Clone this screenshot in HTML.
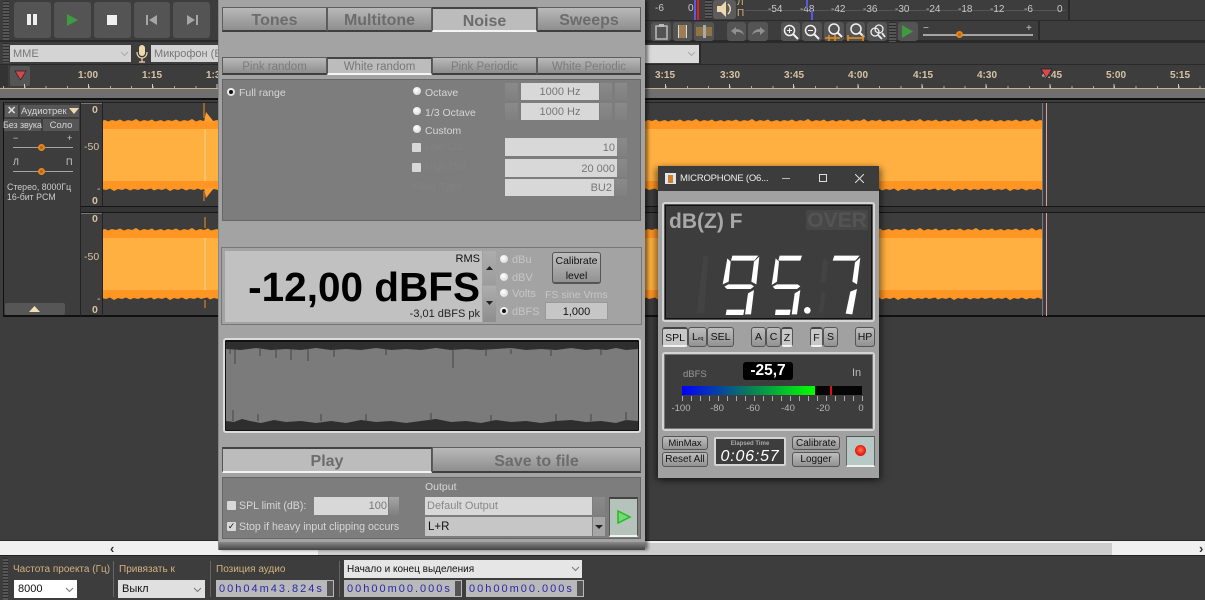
<!DOCTYPE html>
<html><head><meta charset="utf-8">
<style>
html,body{margin:0;padding:0;background:#3d3d3d}
#r{position:relative;width:1205px;height:600px;overflow:hidden;background:#3d3d3d;font-family:"Liberation Sans",sans-serif;font-size:10.5px}
.a,.t{position:absolute;box-sizing:border-box}
.t{white-space:nowrap}
.c{text-align:center}
.tab{background:linear-gradient(#b9b9b9,#8e8e8e);border:1px solid #5d5d5d;border-bottom:2px solid #3f3f3f;color:#6c6c6c;font-weight:bold;font-size:16px;text-align:center;line-height:26px}
.sel{background:#bcbcbc;border-top:2px solid #444;border-bottom:2px solid #f4f4f4;border-left:1px solid #555;border-right:1px solid #555;line-height:25px}
.sub{font-weight:normal;font-size:11.5px;line-height:18px;color:#7c7c7c}
.tb{background:#545454;border-radius:3px}
.rd{position:absolute;width:8px;height:8px;border-radius:50%;background:radial-gradient(circle at 40% 35%,#fff,#d0d0d0)}
.rd.on::after{content:"";position:absolute;left:2px;top:2px;width:4px;height:4px;border-radius:50%;background:#111}
.f{position:absolute;background:#d8d8d8;color:#777;text-align:right;box-sizing:border-box;font-size:11px}
.g{position:absolute;background:linear-gradient(#8a8a8a,#808080);box-sizing:border-box}
.cb{position:absolute;width:9px;height:9px;background:#d8d8d8;border-radius:1px}
.l{color:#d6d6d6}
.btn{position:absolute;box-sizing:border-box;background:linear-gradient(#bdbdbd,#929292);border:1px solid #555;border-radius:3px;color:#111;text-align:center;font-size:10px}
.btnl{background:#c8c8c8;border-top:2px solid #444;border-bottom:2px solid #f2f2f2}
.tan{color:#d2b27f}
.time{position:absolute;background:#b9b9b9;color:#2929ab;font-size:11px;letter-spacing:2px;height:17px;line-height:18px;padding-left:3px;white-space:nowrap;box-sizing:border-box;overflow:hidden}
.time i{position:absolute;right:1px;top:1px;width:6px;height:15px;background:#555;display:block}
.r{color:#d6c3a4;font-weight:bold;font-size:10px;transform:translateX(-50%)}
.ru{color:#d6c3a4;font-size:10.5px}
</style></head><body>
<div id="r">

<!-- top toolbar -->
<div class="a" style="left:3px;top:1px;width:6px;height:39px;background:repeating-linear-gradient(#2c2c2c 0 1px,#565656 1px 3px)"></div>
<div class="a tb" style="left:14px;top:2px;width:37px;height:36px"></div>
<div class="a" style="left:27px;top:14px;width:4px;height:11px;background:#eee"></div>
<div class="a" style="left:33px;top:14px;width:4px;height:11px;background:#eee"></div>
<div class="a tb" style="left:54px;top:2px;width:37px;height:36px"></div>
<svg class="a" style="left:65px;top:13px" width="15" height="14"><path d="M2 1L13 7 2 13Z" fill="#3f9b3f"/></svg>
<div class="a tb" style="left:94px;top:2px;width:37px;height:36px"></div>
<div class="a" style="left:107px;top:15px;width:10px;height:10px;background:#f0f0f0"></div>
<div class="a tb" style="left:134px;top:2px;width:36px;height:36px"></div>
<svg class="a" style="left:145px;top:14px" width="14" height="12"><path d="M1 1H3V11H1ZM12 1V11L4 6Z" fill="#a6a6a6"/></svg>
<div class="a tb" style="left:173px;top:2px;width:37px;height:36px"></div>
<svg class="a" style="left:185px;top:14px" width="14" height="12"><path d="M11 1H13V11H11ZM2 1V11L10 6Z" fill="#a6a6a6"/></svg>

<div class="a" style="left:0;top:40px;width:1205px;height:2px;background:#2a2a2a"></div>
<div class="a" style="left:3px;top:43px;width:6px;height:20px;background:repeating-linear-gradient(#2c2c2c 0 1px,#565656 1px 3px)"></div>
<div class="a" style="left:10px;top:45px;width:121px;height:17px;background:#d4d4d4"></div>
<div class="t" style="left:13px;top:45px;line-height:18px;color:#777;font-size:11px">MME</div>
<svg class="a" style="left:120px;top:51px" width="9" height="6"><path d="M1 1L4.5 4.5 8 1" fill="none" stroke="#aaa"/></svg>
<svg class="a" style="left:135px;top:44px" width="14" height="19"><rect x="4" y="1" width="6" height="11" rx="3" fill="#eed9ae"/><path d="M2 8C2 16 12 16 12 8M7 14V18M4 18H10" fill="none" stroke="#eed9ae" stroke-width="1.2"/></svg>
<div class="a" style="left:151px;top:45px;width:70px;height:17px;background:#d4d4d4"></div>
<div class="t" style="left:154px;top:45px;line-height:18px;color:#777;font-size:11px">Микрофон (Е.А</div>

<!-- right of dialog toolbar -->
<div class="a" style="left:645px;top:20px;width:560px;height:1px;background:#2a2a2a"></div>
<div class="a" style="left:645px;top:42px;width:560px;height:1px;background:#2a2a2a"></div>
<div class="t" style="left:655px;top:3px;font-size:10px;color:#c8c8c8">-6</div>
<div class="t" style="left:688px;top:3px;font-size:10px;color:#c8c8c8">0</div>
<div class="a" style="left:694px;top:0;width:2px;height:20px;background:#5a5ae0"></div>
<div class="a" style="left:697px;top:0;width:2px;height:20px;background:#e02020"></div>
<div class="a" style="left:705px;top:0;width:7px;height:19px;background:repeating-linear-gradient(#2c2c2c 0 1px,#565656 1px 3px)"></div>
<div class="a tb" style="left:713px;top:0;width:23px;height:19px;background:#5c5c5c"></div>
<svg class="a" style="left:715px;top:0" width="20" height="18"><path d="M2 6H6L11 1V17L6 12H2Z" fill="#eed9ae"/><path d="M13 4C16 7 16 11 13 14" fill="none" stroke="#eed9ae" stroke-width="1.5"/></svg>
<div class="t" style="left:737px;top:-3px;font-size:10px;color:#d2b27f">Л</div>
<div class="t" style="left:737px;top:8px;font-size:10px;color:#d2b27f">П</div>
<div class="a" style="left:745px;top:10px;width:320px;height:1px;background:#555"></div>
<div class="t" style="left:768px;top:4px;font-size:10px;color:#c8c8c8">-54</div>
<div class="t" style="left:800px;top:4px;font-size:10px;color:#c8c8c8">-48</div>
<div class="t" style="left:831px;top:4px;font-size:10px;color:#c8c8c8">-42</div>
<div class="t" style="left:863px;top:4px;font-size:10px;color:#c8c8c8">-36</div>
<div class="t" style="left:895px;top:4px;font-size:10px;color:#c8c8c8">-30</div>
<div class="t" style="left:926px;top:4px;font-size:10px;color:#c8c8c8">-24</div>
<div class="t" style="left:958px;top:4px;font-size:10px;color:#c8c8c8">-18</div>
<div class="t" style="left:990px;top:4px;font-size:10px;color:#c8c8c8">-12</div>
<div class="t" style="left:1024px;top:4px;font-size:10px;color:#c8c8c8">-6</div>
<div class="t" style="left:1057px;top:4px;font-size:10px;color:#c8c8c8">0</div>
<div class="a" style="left:806px;top:0;width:2px;height:8px;background:#5a5ae0"></div>
<div class="a" style="left:811px;top:10px;width:2px;height:10px;background:#5a5ae0"></div>
<div class="a" style="left:1068px;top:0;width:2px;height:20px;background:#2a2a2a"></div>

<div class="a tb" style="left:651px;top:22px;width:20px;height:19px"></div>
<svg class="a" style="left:654px;top:23px" width="15" height="18"><path d="M2 3H13V16H2Z" fill="none" stroke="#bbb" stroke-width="1.5"/><rect x="5" y="1" width="5" height="3" fill="#bbb"/></svg>
<div class="a tb" style="left:673px;top:22px;width:19px;height:19px"></div>
<div class="a" style="left:678px;top:25px;width:9px;height:13px;background:#9b7f52;border-left:1px solid #ddd;border-right:1px solid #ddd"></div>
<div class="a tb" style="left:694px;top:22px;width:20px;height:19px"></div>
<div class="a" style="left:696px;top:27px;width:16px;height:9px;background:#8f7445"></div>
<div class="a" style="left:703px;top:25px;width:3px;height:13px;background:#aaa"></div>
<div class="a tb" style="left:727px;top:22px;width:19px;height:19px"></div>
<svg class="a" style="left:728px;top:24px" width="18" height="15"><path d="M3 7L8 3V5C12 5 15 7 16 11 13 8 11 8 8 8V11Z" fill="#8f8f8f"/></svg>
<div class="a tb" style="left:748px;top:22px;width:20px;height:19px"></div>
<svg class="a" style="left:750px;top:24px" width="18" height="15"><path d="M15 7L10 3V5C6 5 3 7 2 11 5 8 7 8 10 8V11Z" fill="#8f8f8f"/></svg>

<div class="a tb" style="left:781px;top:22px;width:19px;height:19px"></div>
<svg class="a" style="left:781px;top:22px" width="19" height="19"><circle cx="8.5" cy="8.5" r="5" fill="none" stroke="#f2f2f2" stroke-width="1.5"/><path d="M12 12L17 17" stroke="#f2f2f2" stroke-width="2"/><path d="M6 8.5H11M8.5 6V11" stroke="#f2f2f2"/></svg>
<div class="a tb" style="left:802px;top:22px;width:20px;height:19px"></div>
<svg class="a" style="left:802px;top:22px" width="19" height="19"><circle cx="8.5" cy="8.5" r="5" fill="none" stroke="#f2f2f2" stroke-width="1.5"/><path d="M12 12L17 17" stroke="#f2f2f2" stroke-width="2"/><path d="M6 8.5H11" stroke="#f2f2f2"/></svg>
<div class="a tb" style="left:824px;top:22px;width:20px;height:19px"></div>
<svg class="a" style="left:824px;top:22px" width="20" height="20"><circle cx="10" cy="7" r="5" fill="none" stroke="#f2f2f2" stroke-width="1.5"/><path d="M13.5 10.500L18 15" stroke="#f2f2f2" stroke-width="2"/><path d="M1 16H16M5 13V19M11 13V19" stroke="#e8901c" stroke-width="1.500"/></svg>
<div class="a tb" style="left:846px;top:22px;width:19px;height:19px"></div>
<svg class="a" style="left:846px;top:22px" width="20" height="20"><circle cx="10" cy="7" r="5" fill="none" stroke="#f2f2f2" stroke-width="1.5"/><path d="M13.500 10.500L18 15" stroke="#f2f2f2" stroke-width="2"/><path d="M2 16H17M2 13V19M17 13V19" stroke="#e8901c" stroke-width="1.500"/></svg>
<div class="a tb" style="left:867px;top:22px;width:20px;height:19px"></div>
<svg class="a" style="left:867px;top:22px" width="20" height="19"><circle cx="8" cy="10" r="4" fill="none" stroke="#eee" stroke-width="1.300"/><circle cx="12" cy="7" r="4" fill="none" stroke="#eee" stroke-width="1.300"/><path d="M15 11L18 15M11 13L15 17" stroke="#eee" stroke-width="1.800"/></svg>
<div class="a" style="left:889px;top:22px;width:7px;height:20px;background:repeating-linear-gradient(#2c2c2c 0 1px,#565656 1px 3px)"></div>
<div class="a tb" style="left:898px;top:22px;width:20px;height:19px"></div>
<svg class="a" style="left:900px;top:24px" width="15" height="15"><path d="M2 1L13 7.500 2 14Z" fill="#3f9b3f"/></svg>
<div class="t" style="left:923px;top:23px;color:#ccc;font-size:10px">−</div>
<div class="t" style="left:1026px;top:23px;color:#ccc;font-size:10px">+</div>
<div class="a" style="left:923px;top:34px;width:110px;height:2px;background:#a5a5a5"></div>
<div class="a" style="left:956px;top:31px;width:7px;height:7px;border-radius:50%;background:#b36a10;border:2px solid #e8841c"></div>
<div class="a" style="left:1038px;top:21px;width:2px;height:22px;background:#2a2a2a"></div>

<div class="a" style="left:645px;top:45px;width:54px;height:18px;background:#d9d9d9"></div>
<svg class="a" style="left:687px;top:51px" width="9" height="6"><path d="M1 1L4.500 4.500 8 1" fill="none" stroke="#aaa"/></svg>
<div class="a" style="left:699px;top:43px;width:2px;height:21px;background:#2a2a2a"></div>

<!-- ruler -->
<div class="a" style="left:0;top:64px;width:1205px;height:1px;background:#2a2a2a"></div>
<div class="a" style="left:0;top:65px;width:8px;height:22px;background:#333"></div>
<div class="a" style="left:10px;top:66px;width:20px;height:20px;background:#555;border-radius:2px"></div>
<svg class="a" style="left:14px;top:70px" width="14" height="11"><path d="M1 1H12L6.500 10Z" fill="#d8474d" stroke="#222" stroke-width=".7"/></svg>
<div class="t r" style="left:88px;top:70px">1:00</div>
<div class="t r" style="left:152px;top:70px">1:15</div>
<div class="t r" style="left:216px;top:70px">1:30</div>
<div class="t r" style="left:665px;top:70px">3:15</div>
<div class="t r" style="left:730px;top:70px">3:30</div>
<div class="t r" style="left:794px;top:70px">3:45</div>
<div class="t r" style="left:858px;top:70px">4:00</div>
<div class="t r" style="left:923px;top:70px">4:15</div>
<div class="t r" style="left:987px;top:70px">4:30</div>
<div class="t r" style="left:1052px;top:70px">4:45</div>
<div class="t r" style="left:1116px;top:70px">5:00</div>
<div class="t r" style="left:1180px;top:70px">5:15</div>
<svg class="a" style="left:1040px;top:68px" width="14" height="11"><path d="M1 1H12L6.500 10Z" fill="#d8474d" stroke="#222" stroke-width=".7"/></svg>
<div class="a" style="left:2.500px;top:86px;width:1203px;height:2px;background:repeating-linear-gradient(90deg,#aaa 0 1px,transparent 1px 21.37px)"></div>
<div class="a" style="left:23.900px;top:84px;width:1182px;height:4px;background:repeating-linear-gradient(90deg,#ccc 0 1px,transparent 1px 64.1px)"></div>
<div class="a" style="left:0;top:88px;width:1205px;height:1px;background:#c8b189"></div>
<div class="a" style="left:0;top:89px;width:1205px;height:9px;background:#6f6f6f"></div>
<div class="a" style="left:0;top:98px;width:1205px;height:2px;background:#111"></div>

<!-- tracks -->
<div class="a" style="left:3px;top:102px;width:1202px;height:215px;background:#3d3d3d;border-left:1px solid #111;border-top:1px solid #222;border-bottom:2px solid #111"></div>
<svg class="a" style="left:0;top:0" width="1205" height="330">
<defs>
<pattern id="jt" x="0" y="0" width="56" height="6" patternUnits="userSpaceOnUse"><path d="M0 0H56V2.500L52 3.500 49 1.500 45 3 41 2 37 3.500 33 1 29 3 25 2 21 3.500 17 1.500 13 3 9 2 5 3.500 2 2 0 2.500Z" fill="#3d3d3d"/></pattern>
</defs>
<rect x="103" y="118" width="940" height="74" fill="#ff9523"/>
<rect x="103" y="129" width="940" height="52" fill="#ffb040"/>
<g transform="translate(103,118)"><rect width="940" height="6" fill="url(#jt)"/></g>
<g transform="translate(1043,192) rotate(180)"><rect width="940" height="6" fill="url(#jt)"/></g>
<rect x="103" y="227" width="940" height="74" fill="#ff9523"/>
<rect x="103" y="238" width="940" height="52" fill="#ffb040"/>
<g transform="translate(103,227)"><rect width="940" height="6" fill="url(#jt)"/></g>
<g transform="translate(1043,301) rotate(180)"><rect width="940" height="6" fill="url(#jt)"/></g>
<path d="M204 103V118M204 191V201" stroke="#b8752a" stroke-width="1.500"/>
<path d="M206 112L214 122H204ZM206 198L214 188H204Z" fill="#ff9f30"/>
<path d="M205 217V228M205 300V308" stroke="#b8752a" stroke-width="1.500"/>
<path d="M205 129V181M205 238V290" stroke="#ffc468" stroke-width="2"/>
<path d="M1042.500 103V206M1042.500 213V316" stroke="#777" stroke-width="1"/>
<path d="M1046.500 103V206M1046.500 213V316" stroke="#d9a3a0" stroke-width="1"/>
<rect x="81" y="207" width="1124" height="5" fill="#353535"/>
<path d="M81 206.500H1205M81 212.500H1205" stroke="#161616" stroke-width="1"/>
<path d="M80.500 103V316" stroke="#222"/>
<path d="M102.500 103V206M102.500 213V316" stroke="#222"/>
<path d="M81 103.500H102M81 213.500H102" stroke="#777"/>
</svg>

<div class="a" style="left:5px;top:105px;width:13px;height:12px;background:#5d5d5d"></div>
<div class="t" style="left:7px;top:104px;color:#ddd;font-size:11px;font-weight:bold">✕</div>
<div class="a" style="left:20px;top:105px;width:59px;height:12px;background:#565656"></div>
<div class="t" style="left:21px;top:105px;color:#d5d5d5;font-size:9.500px;line-height:13px">Аудиотрек</div>
<svg class="a" style="left:69px;top:108px" width="10" height="7"><path d="M0 0H10L5 6Z" fill="#eed9ae"/></svg>
<div class="a" style="left:4px;top:119px;width:37px;height:12px;background:#565656"></div>
<div class="t" style="left:3px;top:119px;color:#d5d5d5;font-size:9px;line-height:13px;letter-spacing:-.1px">Без звука</div>
<div class="a" style="left:43px;top:119px;width:36px;height:12px;background:#565656"></div>
<div class="t c" style="left:43px;top:119px;width:36px;color:#d5d5d5;font-size:9.500px;line-height:13px">Соло</div>
<div class="t" style="left:13px;top:133px;color:#ccc;font-size:9px">−</div>
<div class="t" style="left:67px;top:133px;color:#ccc;font-size:9px">+</div>
<div class="a" style="left:13px;top:147px;width:60px;height:1px;background:#a5a5a5"></div>
<div class="a" style="left:38px;top:144px;width:7px;height:7px;border-radius:50%;background:#b36a10;border:2px solid #e8841c"></div>
<div class="t" style="left:13px;top:157px;color:#ccc;font-size:9px">Л</div>
<div class="t" style="left:66px;top:157px;color:#ccc;font-size:9px">П</div>
<div class="a" style="left:13px;top:171px;width:60px;height:1px;background:#a5a5a5"></div>
<div class="a" style="left:38px;top:168px;width:7px;height:7px;border-radius:50%;background:#b36a10;border:2px solid #e8841c"></div>
<div class="t" style="left:7px;top:182px;color:#ccc;font-size:8.800px">Стерео, 8000Гц</div>
<div class="t" style="left:7px;top:192px;color:#ccc;font-size:8.800px">16-бит PCM</div>
<div class="a" style="left:5px;top:303px;width:60px;height:12px;background:#565656;border-radius:2px"></div>
<svg class="a" style="left:29px;top:306px" width="11" height="6"><path d="M0 6H11L5.500 0Z" fill="#f3dfb6"/></svg>

<div class="t ru" style="left:92px;top:104px;font-weight:bold">0</div>
<div class="t ru" style="left:84px;top:141px">-50</div>
<div class="t ru" style="left:97px;top:183px">-</div>
<div class="t ru" style="left:92px;top:195px;font-weight:bold">0</div>
<div class="t ru" style="left:92px;top:213px;font-weight:bold">0</div>
<div class="t ru" style="left:84px;top:251px">-50</div>
<div class="t ru" style="left:97px;top:293px">-</div>
<div class="t ru" style="left:92px;top:304px;font-weight:bold">0</div>

<!-- scrollbar -->
<div class="a" style="left:0;top:540px;width:1205px;height:1px;background:#2a2a2a"></div>
<div class="a" style="left:0;top:541px;width:1205px;height:14px;background:#f0f0f0"></div>
<div class="a" style="left:318px;top:543px;width:794px;height:12px;background:#cdcdcd"></div>
<div class="t" style="left:110px;top:541px;font-size:13px;color:#333;font-weight:bold">‹</div>
<div class="t" style="left:1199px;top:541px;font-size:13px;color:#333;font-weight:bold">›</div>
<div class="a" style="left:0;top:555px;width:1205px;height:1px;background:#222"></div>

<!-- status bar -->
<div class="a" style="left:0;top:556px;width:1205px;height:44px;background:#3d3d3d"></div>
<div class="a" style="left:3px;top:558px;width:5px;height:42px;background:repeating-linear-gradient(#2c2c2c 0 1px,#565656 1px 3px)"></div>
<div class="t tan" style="left:13px;top:564px;font-size:10px">Частота проекта (Гц)</div>
<div class="a" style="left:14px;top:580px;width:63px;height:18px;background:#fff"></div>
<div class="t" style="left:18px;top:582px;font-size:11px;color:#111;line-height:15px">8000</div>
<svg class="a" style="left:65px;top:587px" width="9" height="6"><path d="M1 1L4.500 4.500 8 1" fill="none" stroke="#777"/></svg>
<div class="a" style="left:113px;top:561px;width:1px;height:36px;background:#666"></div>
<div class="t tan" style="left:119px;top:564px;font-size:10px">Привязать к</div>
<div class="a" style="left:118px;top:580px;width:87px;height:18px;background:#e0e0e0"></div>
<div class="t" style="left:122px;top:582px;font-size:11px;color:#111;line-height:15px">Выкл</div>
<svg class="a" style="left:193px;top:587px" width="9" height="6"><path d="M1 1L4.500 4.500 8 1" fill="none" stroke="#777"/></svg>
<div class="a" style="left:210px;top:561px;width:1px;height:36px;background:#666"></div>
<div class="t tan" style="left:216px;top:564px;font-size:10px">Позиция аудио</div>
<div class="time" style="left:216px;top:580px;width:118px">00h04m43.824s<i></i></div>
<div class="a" style="left:339px;top:561px;width:1px;height:36px;background:#666"></div>
<div class="a" style="left:344px;top:560px;width:238px;height:18px;background:#e6e6e6"></div>
<div class="t" style="left:347px;top:562px;font-size:10px;color:#111;line-height:15px">Начало и конец выделения</div>
<svg class="a" style="left:571px;top:566px" width="9" height="6"><path d="M1 1L4.500 4.500 8 1" fill="none" stroke="#777"/></svg>
<div class="time" style="left:344px;top:580px;width:118px">00h00m00.000s<i></i></div>
<div class="time" style="left:466px;top:580px;width:118px">00h00m00.000s<i></i></div>

<!-- DIALOG -->
<div class="a" style="left:218px;top:0;width:427px;height:550px;background:#a3a3a3;border-left:1px solid #888;box-shadow:3px 0 3px rgba(0,0,0,.45)"></div>
<div class="a tab" style="left:222px;top:7px;width:105px;height:25px">Tones</div>
<div class="a tab" style="left:327px;top:7px;width:105px;height:25px">Multitone</div>
<div class="a tab sel" style="left:432px;top:7px;width:105px;height:25px">Noise</div>
<div class="a tab" style="left:537px;top:7px;width:104px;height:25px">Sweeps</div>
<div class="a tab sub" style="left:222px;top:57px;width:105px;height:18px;line-height:18px">Pink random</div>
<div class="a tab sub sel" style="left:327px;top:57px;width:105px;height:18px;line-height:16px;color:#777">White random</div>
<div class="a tab sub" style="left:432px;top:57px;width:105px;height:18px;line-height:18px">Pink Periodic</div>
<div class="a tab sub" style="left:537px;top:57px;width:104px;height:18px;line-height:18px">White Periodic</div>

<div class="a" style="left:222px;top:79px;width:419px;height:142px;background:#7d7d7d;border:1px solid #666"></div>
<div class="rd on" style="left:227px;top:88px"></div>
<div class="t l" style="left:239px;top:87px">Full range</div>
<div class="rd" style="left:413px;top:87px"></div><div class="t l" style="left:425px;top:87px">Octave</div>
<div class="rd" style="left:413px;top:107px"></div><div class="t l" style="left:425px;top:107px">1/3 Octave</div>
<div class="rd" style="left:413px;top:125px"></div><div class="t l" style="left:425px;top:125px">Custom</div>
<div class="g" style="left:505px;top:83px;width:13px;height:17px"></div>
<div class="f" style="left:521px;top:83px;width:78px;height:17px;line-height:19px;text-align:center">1000 Hz</div>
<div class="g" style="left:600px;top:83px;width:12px;height:17px"></div>
<div class="g" style="left:615px;top:83px;width:12px;height:17px"></div>
<div class="g" style="left:505px;top:103px;width:13px;height:17px"></div>
<div class="f" style="left:521px;top:103px;width:78px;height:17px;line-height:19px;text-align:center">1000 Hz</div>
<div class="g" style="left:600px;top:103px;width:12px;height:17px"></div>
<div class="g" style="left:615px;top:103px;width:12px;height:17px"></div>
<div class="cb" style="left:412px;top:143px"></div><div class="t" style="left:425px;top:141px;color:#828282">Low Cut</div>
<div class="cb" style="left:412px;top:163px"></div><div class="t" style="left:425px;top:161px;color:#828282">High Cut</div>
<div class="t" style="left:413px;top:181px;color:#828282">Filter Type</div>
<div class="f" style="left:505px;top:138px;width:112px;height:18px;line-height:20px;padding-right:2px">10</div>
<div class="g" style="left:617px;top:138px;width:10px;height:18px"></div>
<div class="f" style="left:505px;top:159px;width:112px;height:18px;line-height:20px;padding-right:2px">20 000</div>
<div class="g" style="left:617px;top:159px;width:10px;height:18px"></div>
<div class="f" style="left:505px;top:179px;width:109px;height:17px;line-height:19px;padding-right:2px">BU2</div>
<div class="g" style="left:614px;top:179px;width:13px;height:17px"></div>

<!-- level -->
<div class="a" style="left:221px;top:247px;width:421px;height:78px;border:1px solid #777;background:#a3a3a3"></div>
<div class="a" style="left:225px;top:251px;width:257px;height:71px;background:#c1c1c1"></div>
<div class="t" style="right:725px;top:253px;color:#111;font-size:11px">RMS</div>
<div class="t" style="right:725px;top:262px;color:#000;font-weight:bold;font-size:40.500px;line-height:50px">-12,00 dBFS</div>
<div class="t" style="right:725px;top:308px;color:#222;font-size:11px">-3,01 dBFS pk</div>
<div class="a" style="left:483px;top:251px;width:13px;height:34px;background:linear-gradient(#adadad,#9c9c9c)"></div>
<div class="a" style="left:483px;top:286px;width:13px;height:36px;background:linear-gradient(#adadad,#8e8e8e)"></div>
<svg class="a" style="left:486px;top:266px" width="7" height="4"><path d="M0 4H7L3.500 0Z" fill="#222"/></svg>
<svg class="a" style="left:486px;top:301px" width="7" height="4"><path d="M0 0H7L3.500 4Z" fill="#222"/></svg>
<div class="rd" style="left:500px;top:255px"></div><div class="t" style="left:512px;top:254px;color:#c6c6c6;font-size:11px">dBu</div>
<div class="rd" style="left:500px;top:273px"></div><div class="t" style="left:512px;top:272px;color:#c6c6c6;font-size:11px">dBV</div>
<div class="rd" style="left:500px;top:289px"></div><div class="t" style="left:512px;top:288px;color:#c6c6c6;font-size:11px">Volts</div>
<div class="rd on" style="left:500px;top:307px"></div><div class="t" style="left:512px;top:306px;color:#c6c6c6;font-size:11px">dBFS</div>
<div class="btn" style="left:552px;top:252px;width:49px;height:32px;line-height:15px;padding-top:1px;border-bottom:2px solid #555;font-size:10.500px">Calibrate<br>level</div>
<div class="t" style="left:545px;top:289px;color:#c6c6c6">FS sine Vrms</div>
<div class="a c" style="left:545px;top:302px;width:63px;height:18px;background:#c6c6c6;border:1px solid #999;line-height:18px;color:#111;font-size:11px">1,000</div>

<!-- generator -->
<div class="a" style="left:223px;top:338px;width:418px;height:95px;border:2px solid #dcdcdc;border-radius:3px;background:#111"></div>
<div class="a" style="left:226px;top:342px;width:412px;height:88px;background:#7b7b7b"></div>
<svg class="a" style="left:226px;top:342px" width="412" height="88">
<path d="M0 0H412V7L400 8 390 6 380 8 370 7 360 8 345 6 330 8 315 7 300 8 285 6 270 7 255 8 240 7 225 8 210 6 195 8 180 7 165 8 150 6 135 8 120 7 105 8 90 6 75 8 60 7 45 8 30 6 15 8 0 7Z" fill="#2e2e2e"/>
<path d="M4 7V12M9 7V22M34 7V14M50 7V16M65 7V18M82 7V19M108 7V15M160 7V13M227 7V26M260 7V14M285 7V12M325 7V14M375 7V13" stroke="#444" stroke-width="1" fill="none"/>
<path d="M0 88V79L8 80 16 77 24 79 35 81 48 78 60 80 75 79 90 81 105 79 120 81 135 78 150 80 165 79 180 81 195 79 210 77 225 80 240 79 255 81 270 78 285 80 300 79 315 81 330 79 345 78 360 80 375 79 390 81 400 78 412 79V88Z" fill="#2e2e2e"/>
<path d="M7 79V68M32 79V72M95 79V72M140 79V72M205 79V71M265 79V73M330 79V72M365 79V72M400 79V70" stroke="#444" fill="none"/>
</svg>

<!-- play row -->
<div class="a tab sel" style="left:222px;top:447px;width:210px;height:26px;font-size:16px;line-height:26px">Play</div>
<div class="a tab" style="left:432px;top:447px;width:209px;height:26px;font-size:16px;line-height:27px">Save to file</div>
<div class="a" style="left:222px;top:477px;width:419px;height:62px;background:#7d7d7d;border:1px solid #666"></div>
<div class="cb" style="left:227px;top:501px"></div>
<div class="t l" style="left:239px;top:500px;font-size:10.600px">SPL limit (dB):</div>
<div class="f" style="left:314px;top:497px;width:74px;height:18px;line-height:19px;padding-right:1px">100</div>
<div class="g" style="left:389px;top:497px;width:10px;height:18px;background:linear-gradient(#a5a5a5,#808080)"></div>
<div class="cb" style="left:227px;top:522px;color:#111;font-size:9px;line-height:9px;text-align:center">✓</div>
<div class="t l" style="left:239px;top:521px;font-size:10.600px">Stop if heavy input clipping occurs</div>
<div class="t l" style="left:425px;top:481px">Output</div>
<div class="f" style="left:425px;top:497px;width:167px;height:18px;line-height:19px;text-align:left;padding-left:2px;color:#888">Default Output</div>
<div class="g" style="left:593px;top:497px;width:12px;height:18px"></div>
<div class="f" style="left:425px;top:517px;width:167px;height:19px;line-height:20px;text-align:left;padding-left:3px;color:#111;font-size:11.500px;background:#c6c6c6">L+R</div>
<div class="g" style="left:593px;top:517px;width:12px;height:19px;background:#a6a6a6"></div>
<svg class="a" style="left:595px;top:525px" width="8" height="4"><path d="M0 0H8L4 4Z" fill="#222"/></svg>
<div class="a" style="left:609px;top:497px;width:29px;height:40px;background:#b6c2bc;border-top:2px solid #444;border-left:1px solid #555;border-right:1px solid #555;border-bottom:2px solid #f2f2f2"></div>
<svg class="a" style="left:616px;top:509px" width="16" height="16"><path d="M2 2L14 8 2 14Z" fill="#7bd67b" stroke="#1fbf1f" stroke-width="1.500"/></svg>
<div class="a" style="left:219px;top:542px;width:426px;height:8px;background:linear-gradient(#8a8a8a,#444)"></div>

<!-- METER WINDOW -->
<div class="a" style="left:658px;top:166px;width:221px;height:312px;background:#a1a1a1;box-shadow:-3px 2px 6px rgba(0,0,0,.4),3px 2px 6px rgba(0,0,0,.4)"></div>
<div class="a" style="left:658px;top:166px;width:221px;height:25px;background:#3c3c3c"></div>
<div class="a" style="left:665px;top:173px;width:11px;height:11px;background:#dde6ee"></div>
<div class="a" style="left:668px;top:175px;width:5px;height:8px;background:#d47f2c"></div>
<div class="t" style="left:680px;top:172px;color:#eee;font-size:9.500px;letter-spacing:-.2px;line-height:14px">MICROPHONE (О6...</div>
<div class="a" style="left:782px;top:178px;width:8px;height:1px;background:#bbb"></div>
<div class="a" style="left:819px;top:174px;width:8px;height:8px;border:1px solid #ddd"></div>
<svg class="a" style="left:855px;top:174px" width="9" height="9"><path d="M0 0L9 9M9 0L0 9" stroke="#ddd"/></svg>

<div class="a" style="left:662px;top:202px;width:213px;height:120px;border:2px solid #d4d4d4;border-radius:3px;background:#555"></div>
<div class="a" style="left:665px;top:205px;width:207px;height:114px;background:#3d3d3d;border:1px solid #111"></div>
<div class="t" style="left:669px;top:210px;color:#a8a8a8;font-weight:bold;font-size:21px;line-height:23px">dB(Z) F</div>
<div class="a" style="left:806px;top:210px;width:62px;height:20px;background:#474747"></div>
<div class="t c" style="left:806px;top:210px;width:62px;color:#545454;font-weight:bold;font-size:21px;line-height:21px">OVER</div>
<svg class="a" style="left:655px;top:165px" width="230" height="180" viewBox="0 0 690 540">
<g fill="#434343"><path d="M145 272L160 272 148 445 125 445 135 360Z"/><path d="M505 278L520 290 512 350 496 355ZM500 375L512 385 505 440 490 445Z"/></g>
<g fill="#fff">
<path d="M232 272H310L298 287H228Z"/>
<path d="M217 280L227 290 221 350 203 358Z"/>
<path d="M313 275L304 358 289 350 297 290Z"/>
<path d="M220 358H288L297 364 287 372H216L208 365Z"/>
<path d="M297 375L288 448 270 448 279 385Z"/>
<path d="M215 434H268L265 450H212Z"/>
<path d="M374 272H441L436 287H370Z"/>
<path d="M362 280L372 290 366 350 350 360Z"/>
<path d="M366 358H428L436 364 426 372H360L353 365Z"/>
<path d="M436 375L426 448 410 448 419 385Z"/>
<path d="M362 434H407L404 450H360Z"/>
<circle cx="457" cy="436" r="10"/>
<path d="M538 272H614L601 287H533Z"/>
<path d="M616 278L606 358 592 350 600 292Z"/>
<path d="M606 372L592 448 572 446 586 380Z"/>
</g></svg>

<div class="btn btnl" style="left:662px;top:327px;width:26px;height:20px;line-height:18px;font-size:10.500px">SPL</div>
<div class="btn" style="left:688px;top:327px;width:19px;height:20px;line-height:18px;text-align:left;padding-left:3px;font-size:10.500px">L<span style="font-size:5px">eq</span></div>
<div class="btn" style="left:707px;top:327px;width:27px;height:20px;line-height:18px;font-size:10.500px">SEL</div>
<div class="btn" style="left:751px;top:327px;width:15px;height:20px;line-height:18px;font-size:10.500px">A</div>
<div class="btn" style="left:766px;top:327px;width:15px;height:20px;line-height:18px;font-size:10.500px">C</div>
<div class="btn btnl" style="left:781px;top:327px;width:12px;height:20px;line-height:18px;font-size:10.500px">Z</div>
<div class="btn btnl" style="left:810px;top:327px;width:13px;height:20px;line-height:18px;font-size:10.500px">F</div>
<div class="btn" style="left:823px;top:327px;width:15px;height:20px;line-height:18px;font-size:10.500px">S</div>
<div class="btn" style="left:855px;top:327px;width:20px;height:20px;line-height:18px;font-size:10.500px">HP</div>

<div class="a" style="left:662px;top:352px;width:213px;height:79px;border:2px solid #d4d4d4;border-radius:3px;background:#3d3d3d;outline:1px solid #777;outline-offset:-3px"></div>
<div class="t" style="left:683px;top:369px;color:#999;font-size:9.500px">dBFS</div>
<div class="a" style="left:743px;top:362px;width:50px;height:18px;background:#000;border-radius:3px"></div>
<div class="t c" style="left:743px;top:362px;width:50px;color:#fff;font-weight:bold;font-size:15.500px;line-height:18px">-25,7</div>
<div class="t" style="left:852px;top:367px;color:#bbb;font-size:11px">In</div>
<div class="a" style="left:682px;top:386px;width:180px;height:9px;background:#050505"></div>
<div class="a" style="left:682px;top:386px;width:133px;height:9px;background:linear-gradient(90deg,#0000ff,#0a7a5a 50%,#00ff00)"></div>
<div class="a" style="left:830px;top:386px;width:2px;height:9px;background:#e01010"></div>
<div class="a" style="left:682px;top:396px;width:181px;height:5px;background:repeating-linear-gradient(90deg,#aaa 0 1px,transparent 1px 9px)"></div>
<div class="t c" style="left:666px;top:403px;width:30px;color:#b5b5b5;font-size:9.500px">-100</div>
<div class="t c" style="left:702px;top:403px;width:30px;color:#b5b5b5;font-size:9.500px">-80</div>
<div class="t c" style="left:738px;top:403px;width:30px;color:#b5b5b5;font-size:9.500px">-60</div>
<div class="t c" style="left:773px;top:403px;width:30px;color:#b5b5b5;font-size:9.500px">-40</div>
<div class="t c" style="left:808px;top:403px;width:30px;color:#b5b5b5;font-size:9.500px">-20</div>
<div class="t c" style="left:846px;top:403px;width:30px;color:#b5b5b5;font-size:9.500px">0</div>

<div class="btn" style="left:662px;top:436px;width:46px;height:14px;line-height:13px;font-size:9.500px">MinMax</div>
<div class="btn" style="left:662px;top:452px;width:46px;height:15px;line-height:14px">Reset All</div>
<div class="a" style="left:714px;top:437px;width:72px;height:29px;border:2px solid #d4d4d4;border-radius:2px;background:#3d3d3d"></div>
<div class="t c" style="left:714px;top:441px;width:72px;color:#aaa;font-size:6px;font-weight:bold;line-height:7px">Elapsed Time</div>
<div class="t c" style="left:714px;top:448px;width:72px;color:#fff;font-size:16px;font-style:italic;line-height:17px;letter-spacing:.8px">0:06:57</div>
<div class="btn" style="left:792px;top:436px;width:48px;height:14px;line-height:13px">Calibrate</div>
<div class="btn" style="left:792px;top:452px;width:48px;height:15px;line-height:14px">Logger</div>
<div class="a" style="left:846px;top:436px;width:29px;height:31px;background:#b8c8c4;border-top:1px solid #555;border-left:1px solid #666;border-right:1px solid #666;border-bottom:2px solid #f0f0f0"></div>
<div class="a" style="left:855px;top:445px;width:11px;height:11px;border-radius:50%;background:radial-gradient(circle at 50% 45%,#ff7a50,#e81a10 60%,#b02010)"></div>

</div>
</body></html>
